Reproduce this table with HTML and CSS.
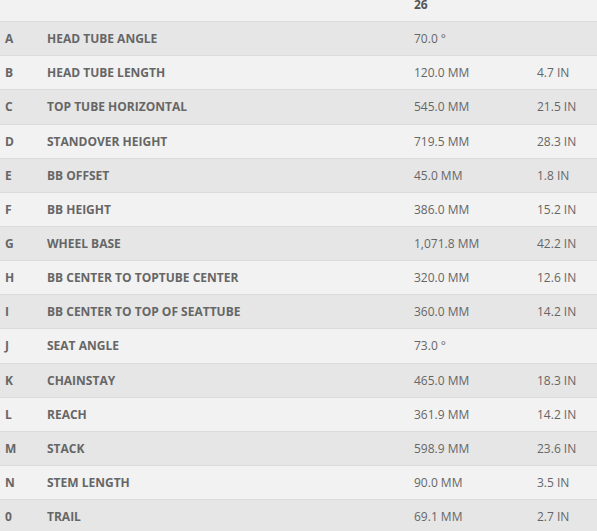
FILE: index.html
```html
<!DOCTYPE html>
<html>
<head>
<meta charset="utf-8">
<link rel="stylesheet" href="styles.css">
</head>
<body>
<div class="wrap">
<table class="geo">
<thead>
<tr><th class="c-key"></th><th class="c-name"></th><th class="c-val">26</th><th class="c-in"></th></tr>
</thead>
<tbody>
<tr><td class="c-key">A</td><td class="c-name">HEAD TUBE ANGLE</td><td class="c-val">70.0 °</td><td class="c-in"></td></tr>
<tr><td class="c-key">B</td><td class="c-name">HEAD TUBE LENGTH</td><td class="c-val">120.0 MM</td><td class="c-in">4.7 IN</td></tr>
<tr><td class="c-key">C</td><td class="c-name">TOP TUBE HORIZONTAL</td><td class="c-val">545.0 MM</td><td class="c-in">21.5 IN</td></tr>
<tr><td class="c-key">D</td><td class="c-name">STANDOVER HEIGHT</td><td class="c-val">719.5 MM</td><td class="c-in">28.3 IN</td></tr>
<tr><td class="c-key">E</td><td class="c-name">BB OFFSET</td><td class="c-val">45.0 MM</td><td class="c-in">1.8 IN</td></tr>
<tr><td class="c-key">F</td><td class="c-name">BB HEIGHT</td><td class="c-val">386.0 MM</td><td class="c-in">15.2 IN</td></tr>
<tr><td class="c-key">G</td><td class="c-name">WHEEL BASE</td><td class="c-val">1,071.8 MM</td><td class="c-in">42.2 IN</td></tr>
<tr><td class="c-key">H</td><td class="c-name">BB CENTER TO TOPTUBE CENTER</td><td class="c-val">320.0 MM</td><td class="c-in">12.6 IN</td></tr>
<tr><td class="c-key">I</td><td class="c-name">BB CENTER TO TOP OF SEATTUBE</td><td class="c-val">360.0 MM</td><td class="c-in">14.2 IN</td></tr>
<tr><td class="c-key">J</td><td class="c-name">SEAT ANGLE</td><td class="c-val">73.0 °</td><td class="c-in"></td></tr>
<tr><td class="c-key">K</td><td class="c-name">CHAINSTAY</td><td class="c-val">465.0 MM</td><td class="c-in">18.3 IN</td></tr>
<tr><td class="c-key">L</td><td class="c-name">REACH</td><td class="c-val">361.9 MM</td><td class="c-in">14.2 IN</td></tr>
<tr><td class="c-key">M</td><td class="c-name">STACK</td><td class="c-val">598.9 MM</td><td class="c-in">23.6 IN</td></tr>
<tr><td class="c-key">N</td><td class="c-name">STEM LENGTH</td><td class="c-val">90.0 MM</td><td class="c-in">3.5 IN</td></tr>
<tr><td class="c-key">0</td><td class="c-name">TRAIL</td><td class="c-val">69.1 MM</td><td class="c-in">2.7 IN</td></tr>
</tbody>
</table>
</div>
</body>
</html>
```

FILE: styles.css
```css
html, body {
  margin: 0;
  padding: 0;
  background: #f2f2f2;
}
.wrap {
  margin-top: -12px;
  overflow: hidden;
}
.geo {
  width: 597px;
  border-collapse: collapse;
  table-layout: fixed;
  font-family: "Open Sans", "DejaVu Sans", sans-serif;
  font-size: 12px;
  line-height: 1.428571;
  color: #666;
}
.geo th, .geo td {
  padding: 8px 8px;
  text-align: left;
  vertical-align: top;
  border-top: 1px solid #dcdcdc;
  white-space: nowrap;
}
.geo thead th {
  border-top: none;
  font-weight: 700;
  background: #f2f2f2;
  color: #555;
}
.geo tbody tr:nth-child(odd) {
  background: #e6e6e6;
}
.geo tbody tr:nth-child(even) {
  background: #f2f2f2;
}
.c-key {
  width: 26px;
  padding-left: 5px !important;
  font-weight: 700;
}
.c-name {
  width: 351px;
  font-weight: 700;
}
.c-val {
  width: 107px;
  font-weight: 400;
}
.c-in {
  font-weight: 400;
}
```
